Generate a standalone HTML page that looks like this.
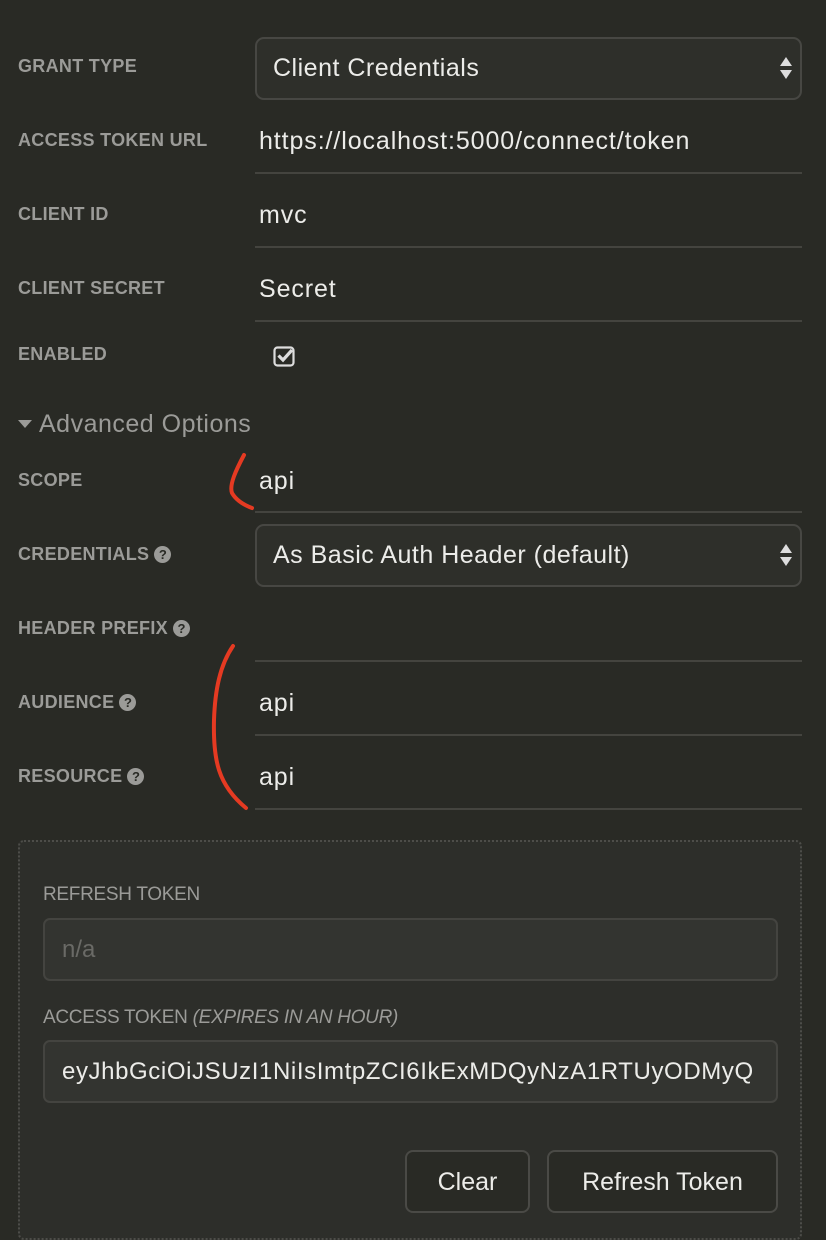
<!DOCTYPE html>
<html><head><meta charset="utf-8"><style>
*{box-sizing:border-box;margin:0;padding:0}
body{width:826px;height:1222px;background:#292a25;font-family:"Liberation Sans",sans-serif;position:relative;overflow:hidden}
.a{position:absolute}
.lbl{position:absolute;left:18px;font-size:18px;letter-spacing:0.3px;font-weight:bold;color:#9b9b98;white-space:nowrap}
.val{position:absolute;left:259px;font-size:25px;letter-spacing:0.9px;color:#ecece9;white-space:nowrap}
.ul{position:absolute;left:255px;width:547px;height:2px;background:#44443f}
.sel{position:absolute;left:255px;width:547px;height:63px;border:2px solid #474743;border-radius:9px;background:#2e2f2a;font-size:25px;letter-spacing:0.5px;color:#ecece9;padding:15px 0 0 16px}
.q{display:inline-block;width:17px;height:17px;border-radius:50%;background:#9b9b98;color:#292a25;font-size:13px;text-align:center;line-height:17px;vertical-align:1px;margin-left:5px;letter-spacing:0}
.arr{position:absolute;right:8px;top:18px;width:0;height:0;border-left:6px solid transparent;border-right:6px solid transparent}
.inp{position:absolute;left:43px;width:735px;height:63px;border:2px solid #444440;border-radius:7px;background:#333430;font-size:24px;padding:16px 0 0 17px;white-space:nowrap;overflow:hidden}
.btn{position:absolute;top:1150px;height:63px;border:2px solid #4a4a46;border-radius:8px;background:#292a25;color:#ecece9;font-size:25px;text-align:center;line-height:61px}
.lb2{position:absolute;left:43px;font-size:19px;letter-spacing:-0.3px;color:#9b9b98;white-space:nowrap}
</style></head><body>
<div class="lbl" style="top:56px">GRANT TYPE</div>
<div class="sel" style="top:37px">Client Credentials<div class="arr" style="border-bottom:9px solid #ddd"></div><div class="arr" style="top:31px;border-top:9px solid #ddd"></div></div>
<div class="lbl" style="top:130px">ACCESS TOKEN URL</div>
<div class="val" style="top:127px">https://localhost:5000/connect/token</div>
<div class="ul" style="top:172px"></div>
<div class="lbl" style="top:204px">CLIENT ID</div>
<div class="val" style="top:201px">mvc</div>
<div class="ul" style="top:246px"></div>
<div class="lbl" style="top:278px">CLIENT SECRET</div>
<div class="val" style="top:275px">Secret</div>
<div class="ul" style="top:320px"></div>
<div class="lbl" style="top:344px">ENABLED</div>
<svg class="a" style="left:273px;top:344px" width="24" height="24" viewBox="0 0 24 24"><rect x="1.5" y="3.5" width="19" height="18" rx="3" fill="none" stroke="#ddd" stroke-width="2.2"/><path d="M5.5 11.5l4.5 4.5 9-10" fill="none" stroke="#ddd" stroke-width="3.2"/></svg>
<svg class="a" style="left:18px;top:420px" width="16" height="10"><path d="M0 0h14l-7 8z" fill="#9b9b98"/></svg>
<div class="a" style="left:39px;top:410px;font-size:25px;letter-spacing:0.5px;color:#9b9b98">Advanced Options</div>
<div class="lbl" style="top:470px">SCOPE</div>
<div class="val" style="top:467px">api</div>
<div class="ul" style="top:511px"></div>
<div class="lbl" style="top:544px">CREDENTIALS<span class="q">?</span></div>
<div class="sel" style="top:524px">As Basic Auth Header (default)<div class="arr" style="border-bottom:9px solid #ddd"></div><div class="arr" style="top:31px;border-top:9px solid #ddd"></div></div>
<div class="lbl" style="top:618px">HEADER PREFIX<span class="q">?</span></div>
<div class="ul" style="top:660px"></div>
<div class="lbl" style="top:692px">AUDIENCE<span class="q">?</span></div>
<div class="val" style="top:689px">api</div>
<div class="ul" style="top:734px"></div>
<div class="lbl" style="top:766px">RESOURCE<span class="q">?</span></div>
<div class="val" style="top:763px">api</div>
<div class="ul" style="top:808px"></div>
<svg class="a" style="left:0;top:0" width="826" height="830"><g fill="none" stroke="#e53a22" stroke-width="4" stroke-linecap="round"><path d="M244 455C236 470 229 485 232 493C236 500 244 505 252 508"/><path d="M233 646C220 665 215 690 214 720C213 760 218 785 246 808"/></g></svg>
<div class="a" style="left:18px;top:840px;width:784px;height:400px;border:2px dotted #4d4d49;border-radius:6px;background:#2d2e2a"></div>
<div class="lb2" style="top:884px">REFRESH TOKEN</div>
<div class="inp" style="top:918px;color:#6a6a66">n/a</div>
<div class="lb2" style="top:1007px">ACCESS TOKEN <i>(EXPIRES IN AN HOUR)</i></div>
<div class="inp" style="top:1040px;color:#ecece9;font-size:24px;letter-spacing:0.6px">eyJhbGciOiJSUzI1NiIsImtpZCI6IkExMDQyNzA1RTUyODMyQ</div>
<div class="btn" style="left:405px;width:125px">Clear</div>
<div class="btn" style="left:547px;width:231px">Refresh Token</div>
</body></html>
